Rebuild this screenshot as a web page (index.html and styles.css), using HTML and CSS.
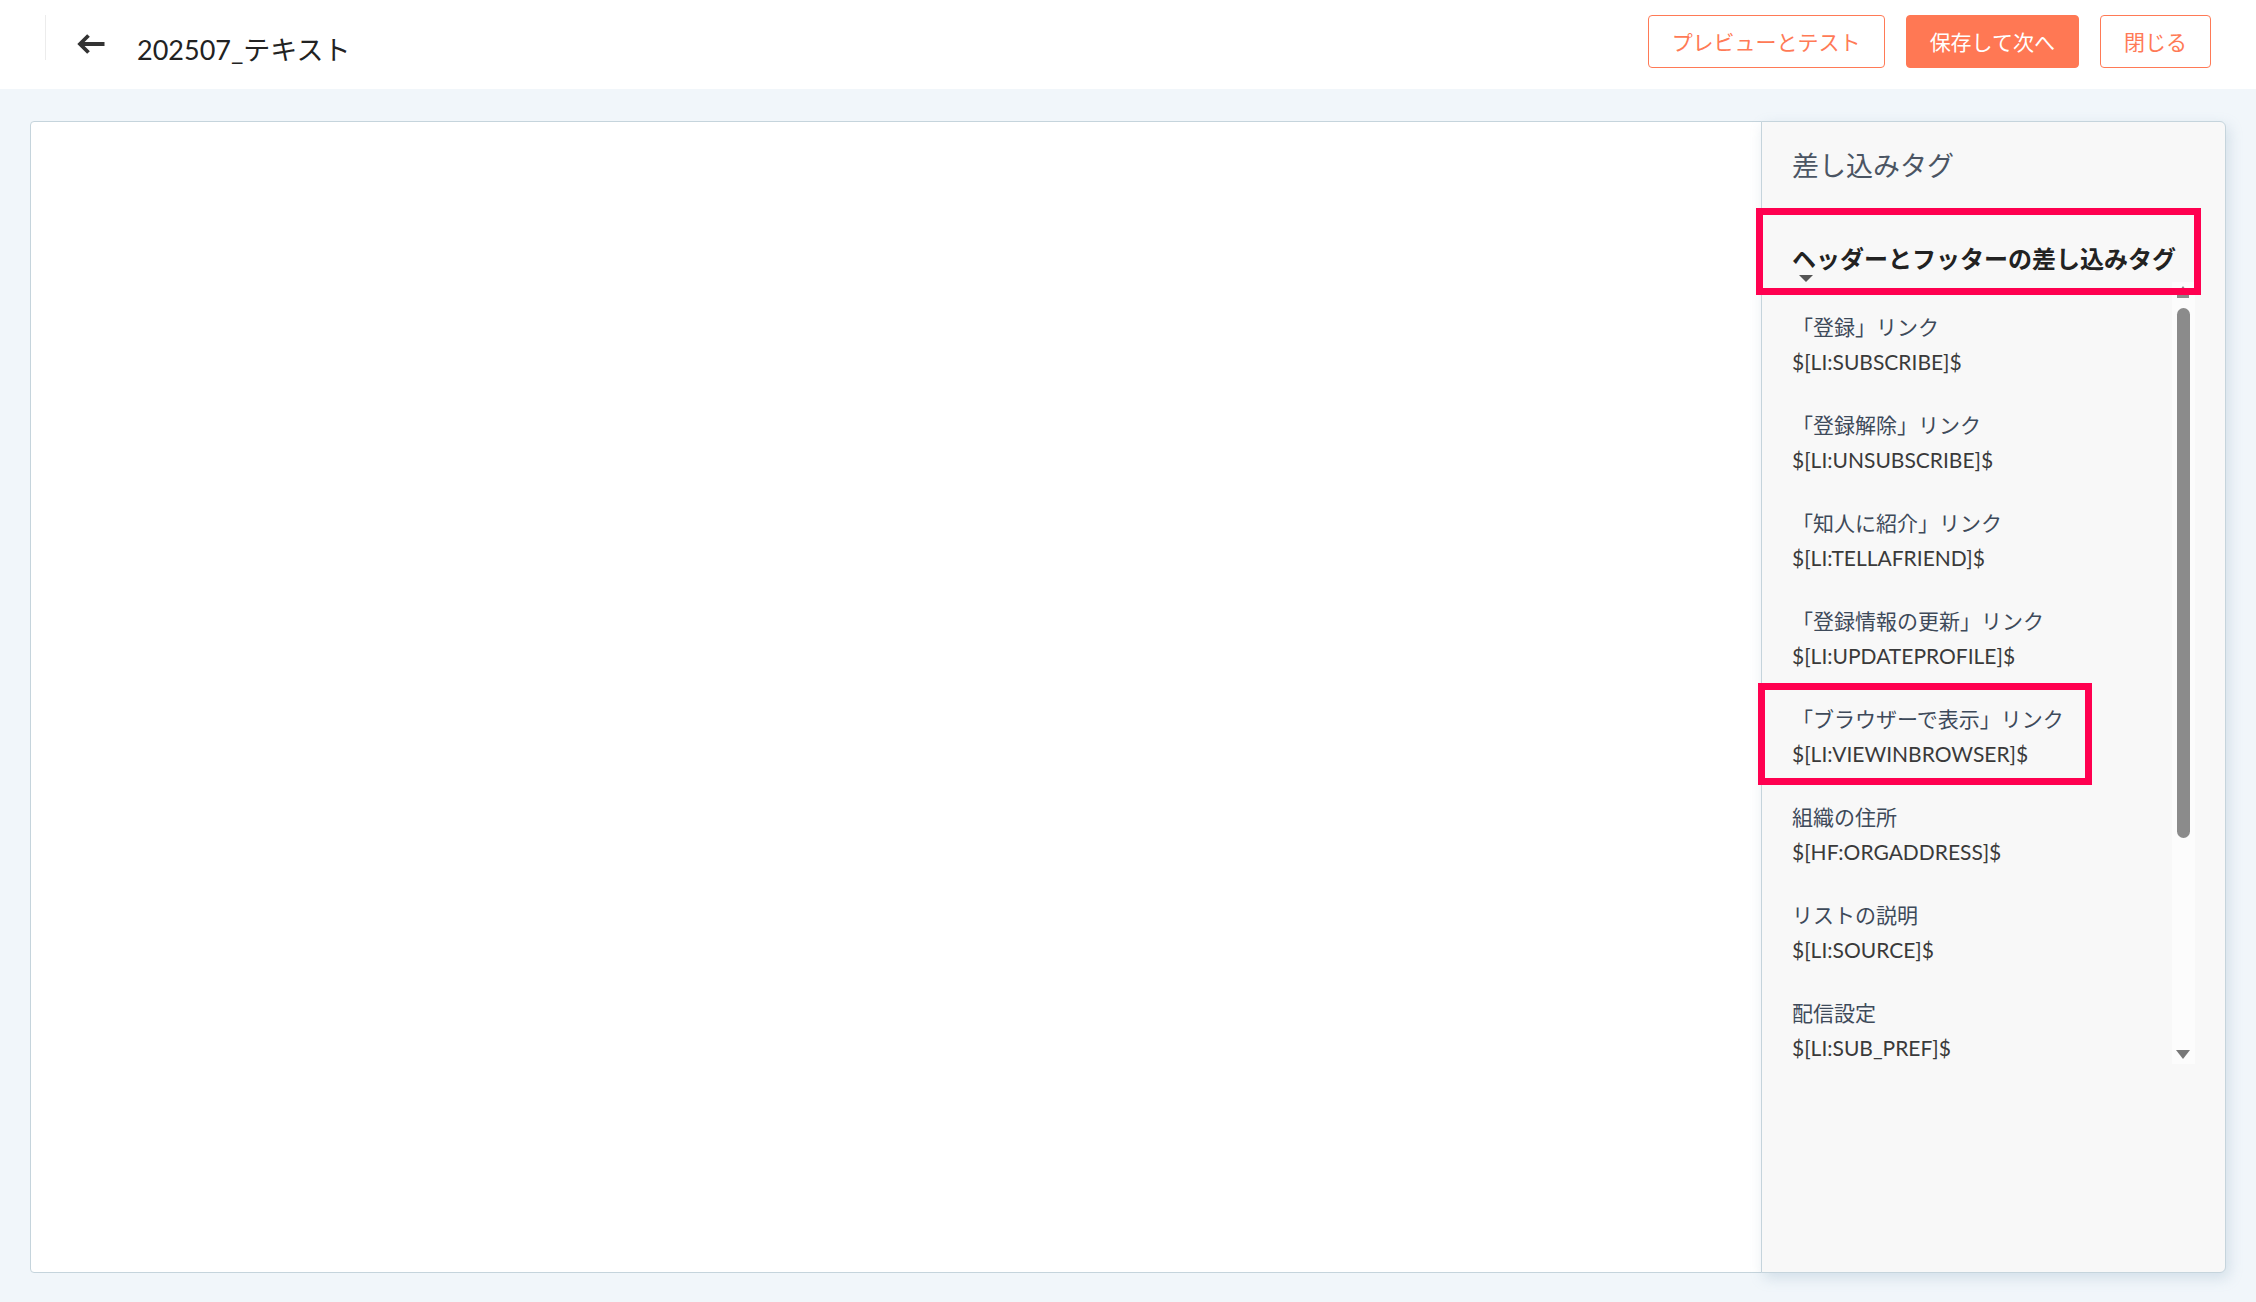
FILE: index.html
```html
<!DOCTYPE html>
<html lang="ja">
<head>
<meta charset="utf-8">
<title>202507_テキスト</title>
<link rel="stylesheet" href="styles.css">
</head>
<body>
<header class="topbar">
  <div class="sep"></div>
  <svg class="back" width="30" height="24" viewBox="0 0 30 24" aria-hidden="true">
    <path d="M28.5 12H4M12.5 3.5L4 12L12.5 20.5" fill="none" stroke="#333" stroke-width="3.8" stroke-linecap="butt" stroke-linejoin="miter"/>
  </svg>
  <h1 class="title">202507_テキスト</h1>
  <div class="actions">
    <button class="btn btn-outline">プレビューとテスト</button>
    <button class="btn btn-primary">保存して次へ</button>
    <button class="btn btn-outline">閉じる</button>
  </div>
</header>
<main class="main">
  <div class="card">
    <section class="editor"></section>
    <aside class="panel">
      <h2 class="panel-title">差し込みタグ</h2>
      <div class="group-head">ヘッダーとフッターの差し込みタグ</div>
      <div class="caret"></div>
      <div class="list-wrap">
        <ul class="list">
          <li class="item"><div class="label">「登録」リンク</div><div class="code">$[LI:SUBSCRIBE]$</div></li>
          <li class="item"><div class="label">「登録解除」リンク</div><div class="code">$[LI:UNSUBSCRIBE]$</div></li>
          <li class="item"><div class="label">「知人に紹介」リンク</div><div class="code">$[LI:TELLAFRIEND]$</div></li>
          <li class="item"><div class="label">「登録情報の更新」リンク</div><div class="code">$[LI:UPDATEPROFILE]$</div></li>
          <li class="item"><div class="label">「ブラウザーで表示」リンク</div><div class="code">$[LI:VIEWINBROWSER]$</div></li>
          <li class="item"><div class="label">組織の住所</div><div class="code">$[HF:ORGADDRESS]$</div></li>
          <li class="item"><div class="label">リストの説明</div><div class="code">$[LI:SOURCE]$</div></li>
          <li class="item"><div class="label">配信設定</div><div class="code">$[LI:SUB_PREF]$</div></li>
        </ul>
        <div class="scrollbar">
          <div class="sb-up"></div>
          <div class="sb-thumb"></div>
          <div class="sb-down"></div>
        </div>
      </div>
      <div class="mark mark-head"></div>
      <div class="mark mark-item"></div>
    </aside>
  </div>
</main>
</body>
</html>
```

FILE: styles.css
```css
* { box-sizing: border-box; }
html, body { margin: 0; padding: 0; }
body {
  width: 2256px;
  height: 1302px;
  background: #f1f6fa;
  font-family: Lato, "Noto Sans CJK JP", sans-serif;
  color: #333;
  overflow: hidden;
}

.topbar {
  height: 89px;
  background: #fff;
  display: flex;
  align-items: flex-start;
}
.sep {
  width: 1px;
  height: 45px;
  margin: 15px 0 0 45px;
  background: #ececec;
}
.back {
  display: block;
  margin: 32px 0 0 30px;
}
.title {
  margin: 36px 0 0 31px;
  font-size: 27px;
  line-height: 28px;
  font-weight: 400;
  color: #222;
}
.actions {
  margin: 15px 45px 0 auto;
  display: flex;
  gap: 21px;
}
.btn {
  height: 53px;
  padding: 0 23px;
  border: 1px solid #ff7a56;
  border-radius: 4px;
  font-family: Lato, "Noto Sans CJK JP", sans-serif;
  font-size: 21px;
  line-height: 1;
  background: #fff;
  color: #ff7a56;
  cursor: pointer;
}
.btn-primary {
  background: #ff7854;
  border-color: #ff7854;
  color: #fff;
}

.main {
  padding: 32px 30px 29px 30px;
}
.card {
  height: 1152px;
  display: flex;
}
.editor {
  flex: 1;
  background: #fff;
  border: 1px solid #c5d4dc;
  border-radius: 4px 0 0 4px;
}
.panel {
  position: relative;
  width: 465px;
  margin-left: -1px;
  background: #f8f8f8;
  border: 1px solid #c5d4dc;
  border-radius: 0 6px 6px 0;
  box-shadow: 3px 5px 14px rgba(130, 160, 185, 0.28);
  padding: 26px 0 0 30px;
}
.panel-title {
  margin: 0;
  font-size: 27px;
  line-height: 36px;
  font-weight: 400;
  color: #4b5563;
}
.group-head {
  margin-top: 58px;
  font-size: 24px;
  line-height: 34px;
  font-weight: 700;
  color: #222;
}
.caret {
  width: 0;
  height: 0;
  margin: -1px 0 0 7px;
  border-left: 7px solid transparent;
  border-right: 7px solid transparent;
  border-top: 7px solid #555;
}
.list-wrap {
  position: relative;
  height: 782px;
  margin-left: -30px;
}
.list {
  list-style: none;
  margin: 0;
  padding: 27px 0 0 30px;
  height: 100%;
  overflow: hidden;
}
.item {
  margin-bottom: 28px;
}
.label {
  font-size: 21px;
  line-height: 35px;
  color: #3e4a5a;
}
.code {
  font-size: 21px;
  line-height: 35px;
  color: #3a3a3a;
}

.scrollbar {
  position: absolute;
  top: 0;
  right: 30px;
  width: 23px;
  height: 100%;
  background: #fcfcfc;
}
.sb-up {
  position: absolute;
  top: 4px;
  left: 5px;
  width: 0;
  height: 0;
  border-left: 6px solid transparent;
  border-right: 6px solid transparent;
  border-bottom: 8px solid #8a8a8a;
}
.sb-up::after {
  content: "";
  position: absolute;
  top: 8px;
  left: -6px;
  width: 12px;
  height: 4px;
  background: #8a8a8a;
}
.sb-thumb {
  position: absolute;
  top: 26px;
  left: 5px;
  width: 13px;
  height: 530px;
  background: #8b8b8b;
  border-radius: 7px;
}
.sb-down {
  position: absolute;
  top: 768px;
  left: 4px;
  width: 0;
  height: 0;
  border-left: 7px solid transparent;
  border-right: 7px solid transparent;
  border-top: 9px solid #777;
}

.mark {
  position: absolute;
  border: 7px solid #ff0050;
  pointer-events: none;
}
.mark-head {
  left: -6px;
  top: 86px;
  width: 445px;
  height: 87px;
}
.mark-item {
  left: -4px;
  top: 561px;
  width: 334px;
  height: 102px;
}
```
